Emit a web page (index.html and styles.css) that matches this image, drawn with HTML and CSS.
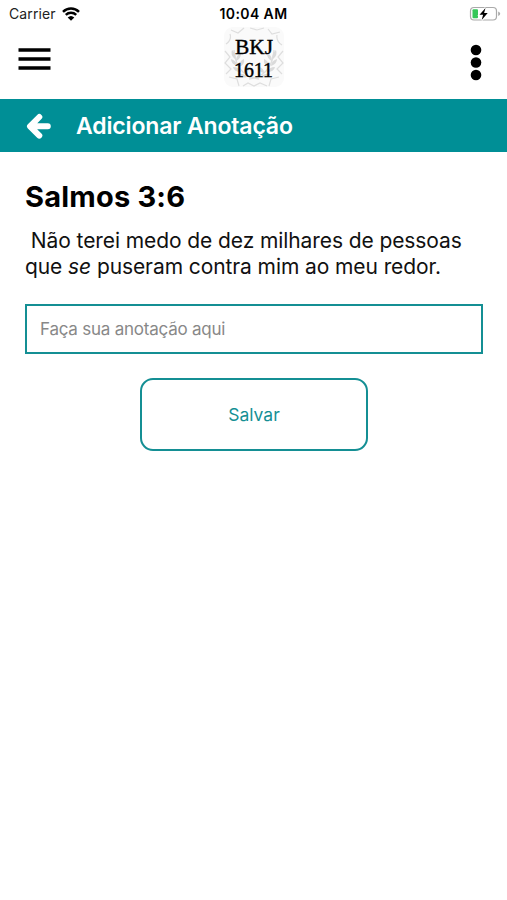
FILE: index.html
```html
<!DOCTYPE html>
<html lang="pt-BR">
<head>
    <meta charset="UTF-8">
    <meta name="viewport" content="width=device-width, initial-scale=1.0">
    <title>Adicionar Anotação</title>
    <link rel="stylesheet" href="styles.css">
</head>
<body>

    <div class="status-bar">
        <div class="carrier">
            <span>Carrier</span>
            <svg class="wifi" width="18" height="14" viewBox="0 0 18 14">
                <path d="M1 4.8a11.6 11.6 0 0 1 16 0M3.8 7.8a7.6 7.6 0 0 1 10.4 0" fill="none" stroke="#000" stroke-width="2.5"/>
                <path d="M9 13.8L5.7 10.5a4.8 4.8 0 0 1 6.6 0z"/>
            </svg>
        </div>
        <span class="time">10:04 AM</span>
        <svg class="battery" width="32" height="16" viewBox="0 0 32 16">
            <rect x="1.5" y="1.5" width="26" height="12.5" rx="3.5" fill="#fff" stroke="#aaa" stroke-width="1.2"/>
            <path d="M29.2 5.5v4.5q2-.8 2-2.25t-2-2.25z" fill="#aaa"/>
            <rect x="3.5" y="3.3" width="5.5" height="9" rx="1" fill="#35c759"/>
            <path d="M16.5 2l-6 6.8h3.6L12.7 14l6-7h-3.6z" stroke="#fff" stroke-width="2"/>
            <path d="M16.5 2l-6 6.8h3.6L12.7 14l6-7h-3.6z"/>
        </svg>
    </div>

    <header>
        <svg class="menu" width="33" height="24" viewBox="0 0 33 24">
            <path d="M.5 2h32M.5 11h32M.5 20h32" stroke="#000" stroke-width="3.6"/>
        </svg>
        <svg class="logo" width="62" height="62" viewBox="0 0 62 62">
            <rect x="1" y="1" width="60" height="60" rx="9" fill="#fafafa"/>
            <g fill="none" stroke="#dedede">
                <path d="M3 18q6-4 4-10M8 4l7 3 6-5M27 2l7 2 7-2M45 3l4 5 8-2M54 9q-1 6 5 10M2 25l5 6-5 6 6 6-5 5M60 25l-5 6 5 6-6 6 5 5M6 51l8 2 2 7M56 51l-8 2-2 7M20 60l5-3 6 3 6-3 7 3" stroke-width="1.2"/>
                <path d="M36 53Q13 50 11 24M26 53q23-3 25-29" stroke-width="1.3"/>
            </g>
            <g fill="#dadada">
                <path d="M12 33q-5-4-3-9 5 4 3 9zM14 40q-6-2-6-7 6 2 6 7zM18 46q-7 0-8-5 6 0 8 5zM24 51q-6 2-9-3 6-1 9 3zM13 35q0-6 5-8 0 6-5 8zM16 41q0-6 5-8 1 6-5 8zM21 47q0-5 5-6 1 5-5 6z"/>
                <path d="M50 33q5-4 3-9-5 4-3 9zM48 40q6-2 6-7-6 2-6 7zM44 46q7 0 8-5-6 0-8 5zM38 51q6 2 9-3-6-1-9 3zM49 35q0-6-5-8 0 6 5 8zM46 41q0-6-5-8-1 6 5 8zM41 47q0-5-5-6-1 5 5 6z"/>
            </g>
            <text class="logo-name" x="12" y="27.5" textLength="38" lengthAdjust="spacingAndGlyphs">BKJ</text>
            <text class="logo-year" x="11" y="51" textLength="39" lengthAdjust="spacingAndGlyphs">1611</text>
        </svg>
        <svg class="more" width="12" height="37" viewBox="0 0 12 37">
            <circle cx="6" cy="6" r="5.3"/>
            <circle cx="6" cy="18.5" r="5.3"/>
            <circle cx="6" cy="31" r="5.3"/>
        </svg>
    </header>

    <div class="title-bar">
        <svg width="26" height="26" viewBox="0 0 26 26">
            <path d="M14.3 4L5 13.3l9.3 9.3M6 13.3h16.8" fill="none" stroke="#fff" stroke-width="6" stroke-linecap="round" stroke-linejoin="round"/>
        </svg>
        <h1>Adicionar Anotação</h1>
    </div>

    <main>
        <h2>Salmos 3:6</h2>
        <p class="verse">&nbsp;Não terei medo de dez milhares de pessoas<br>que <i>se</i> puseram contra mim ao meu redor.</p>
        <input class="note" type="text" placeholder="Faça sua anotação aqui">
        <button class="save-btn">Salvar</button>
    </main>

</body>
</html>
```
FILE: styles.css
```css
* {
    box-sizing: border-box;
}

body {
    font-family: Inter, 'Liberation Sans', sans-serif;
    margin: 0;
    background-color: #fff;
    color: #000;
}

.status-bar {
    display: grid;
    grid-template-columns: 1fr auto 1fr;
    align-items: center;
    height: 27px;
    padding: 0 6px;
    font-size: 14px;
}

.carrier {
    display: flex;
    align-items: center;
    gap: 6px;
    padding-left: 3px;
    color: #222;
    letter-spacing: 0.1px;
}

.time {
    font-weight: 600;
    letter-spacing: 0.4px;
}

.battery {
    justify-self: end;
}

header {
    display: grid;
    grid-template-columns: 1fr 62px 1fr;
    align-items: start;
    height: 72px;
    padding: 0 25px;
}

.menu {
    margin: 21px 0 0 -7px;
}

.logo {
    margin-top: -1px;
}

.logo text {
    font-family: 'Liberation Serif', serif;
    stroke: #000;
    stroke-width: 0.4;
}

.logo-name {
    font-size: 22px;
}

.logo-year {
    font-size: 20px;
}

.more {
    justify-self: end;
    margin-top: 17px;
}

.title-bar {
    display: flex;
    align-items: center;
    gap: 25px;
    height: 53px;
    padding: 0 25px;
    background-color: #008f96;
    color: #fff;
}

h1 {
    margin: 0;
    font-size: 23px;
    font-weight: 600;
    letter-spacing: -0.15px;
}

main {
    padding: 26px 24px 26px 25px;
}

h2 {
    margin: 0 0 12px;
    font-size: 29px;
    line-height: 38px;
    font-weight: 700;
    letter-spacing: 0.2px;
}

.verse {
    margin: 0 0 24px;
    font-size: 21px;
    line-height: 26px;
    letter-spacing: -0.09px;
    color: #111;
    white-space: nowrap;
}

.note {
    display: block;
    width: 100%;
    height: 50px;
    padding: 0 13px;
    border: 2px solid #148f94;
    border-radius: 0;
    font-family: inherit;
    font-size: 17px;
    letter-spacing: -0.23px;
}

.note::placeholder {
    color: #888;
}

.save-btn {
    display: block;
    width: 228px;
    height: 73px;
    margin: 24px auto 0;
    border: 2px solid #148f94;
    border-radius: 13px;
    background-color: #fff;
    color: #148f94;
    font-family: inherit;
    font-size: 17.5px;
}
```
